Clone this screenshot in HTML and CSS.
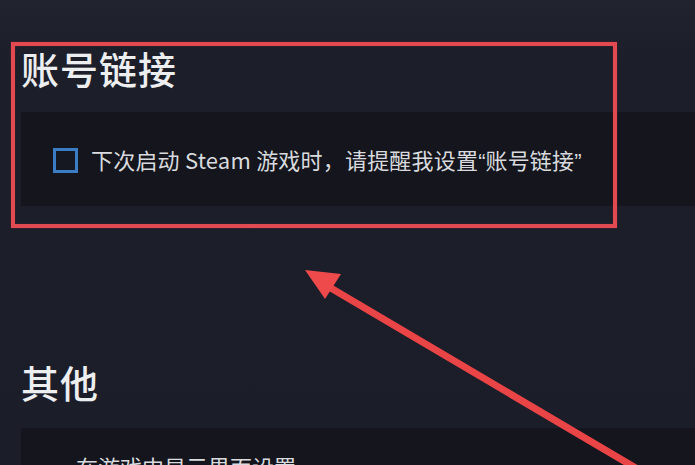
FILE: index.html
```html
<!DOCTYPE html>
<html lang="zh-CN">
<head>
<meta charset="utf-8">
<title>账号链接</title>
<link rel="stylesheet" href="styles.css">
</head>
<body>
<div class="page">
  <section class="section first">
    <h2 class="section-title">账号链接</h2>
    <div class="panel">
      <label class="check-row">
        <span class="checkbox"></span>
        <span class="check-label">下次启动 Steam 游戏时，请提醒我设置<span class="q">“</span>账号链接<span class="q">”</span></span>
      </label>
    </div>
  </section>
  <section class="section second">
    <h2 class="section-title">其他</h2>
    <div class="panel panel-other">
      <div class="other-row">在游戏中显示界面设置</div>
    </div>
  </section>

  <div class="highlight-box"></div>
  <svg class="annot-arrow" width="695" height="465" viewBox="0 0 695 465" aria-hidden="true">
    <line x1="324" y1="284" x2="668" y2="487" stroke="#e94446" stroke-width="7" stroke-linecap="round"/>
    <polygon points="305,270 341,274 325,299" fill="#ee4a4b"/>
  </svg>
</div>
</body>
</html>
```

FILE: styles.css
```css
html, body {
  margin: 0;
  padding: 0;
}
body {
  width: 695px;
  height: 465px;
  overflow: hidden;
  background: linear-gradient(180deg, #21232f 0px, #1c1e2a 60px, #1b1d29 465px);
  font-family: "Noto Sans CJK SC", "Noto Sans", sans-serif;
  color: #d6d8db;
}
.page {
  position: relative;
  width: 695px;
  height: 465px;
  padding-left: 21px;
  box-sizing: border-box;
}
.section-title {
  margin: 0;
  font-size: 38px;
  line-height: 44px;
  height: 44px;
  font-weight: 500;
  color: #eceef0;
  letter-spacing: 1px;
}
.first {
  padding-top: 46px;
}
.first .section-title {
  margin-bottom: 22px;
}
.panel {
  background: #14151d;
}
.first .panel {
  height: 94px;
  display: flex;
  align-items: center;
  padding-left: 32px;
  padding-top: 2px;
  box-sizing: border-box;
}
.check-row {
  display: flex;
  align-items: center;
  gap: 13px;
}
.checkbox {
  width: 25px;
  height: 25px;
  box-sizing: border-box;
  border: 3px solid #3b7dc4;
  background: #151821;
  flex: none;
}
.check-label {
  font-size: 22px;
  line-height: 28px;
  color: #d9dbde;
  letter-spacing: 0.2px;
}
.q {
  font-family: "Liberation Sans", sans-serif;
  letter-spacing: 0;
}
.second {
  padding-top: 154px;
}
.second .section-title {
  margin-bottom: 24px;
}
.panel-other {
  height: 80px;
  padding-left: 55px;
  padding-top: 24px;
  box-sizing: border-box;
}
.other-row {
  font-size: 22px;
  line-height: 28px;
  color: #d9dbde;
}
.highlight-box {
  position: absolute;
  left: 11px;
  top: 42px;
  width: 606px;
  height: 186px;
  box-sizing: border-box;
  border: 4px solid #e24a52;
  box-shadow: 0 0 1px #9c2330, inset 0 0 1px #9c2330;
}
.annot-arrow {
  position: absolute;
  left: 0;
  top: 0;
  pointer-events: none;
}
```
